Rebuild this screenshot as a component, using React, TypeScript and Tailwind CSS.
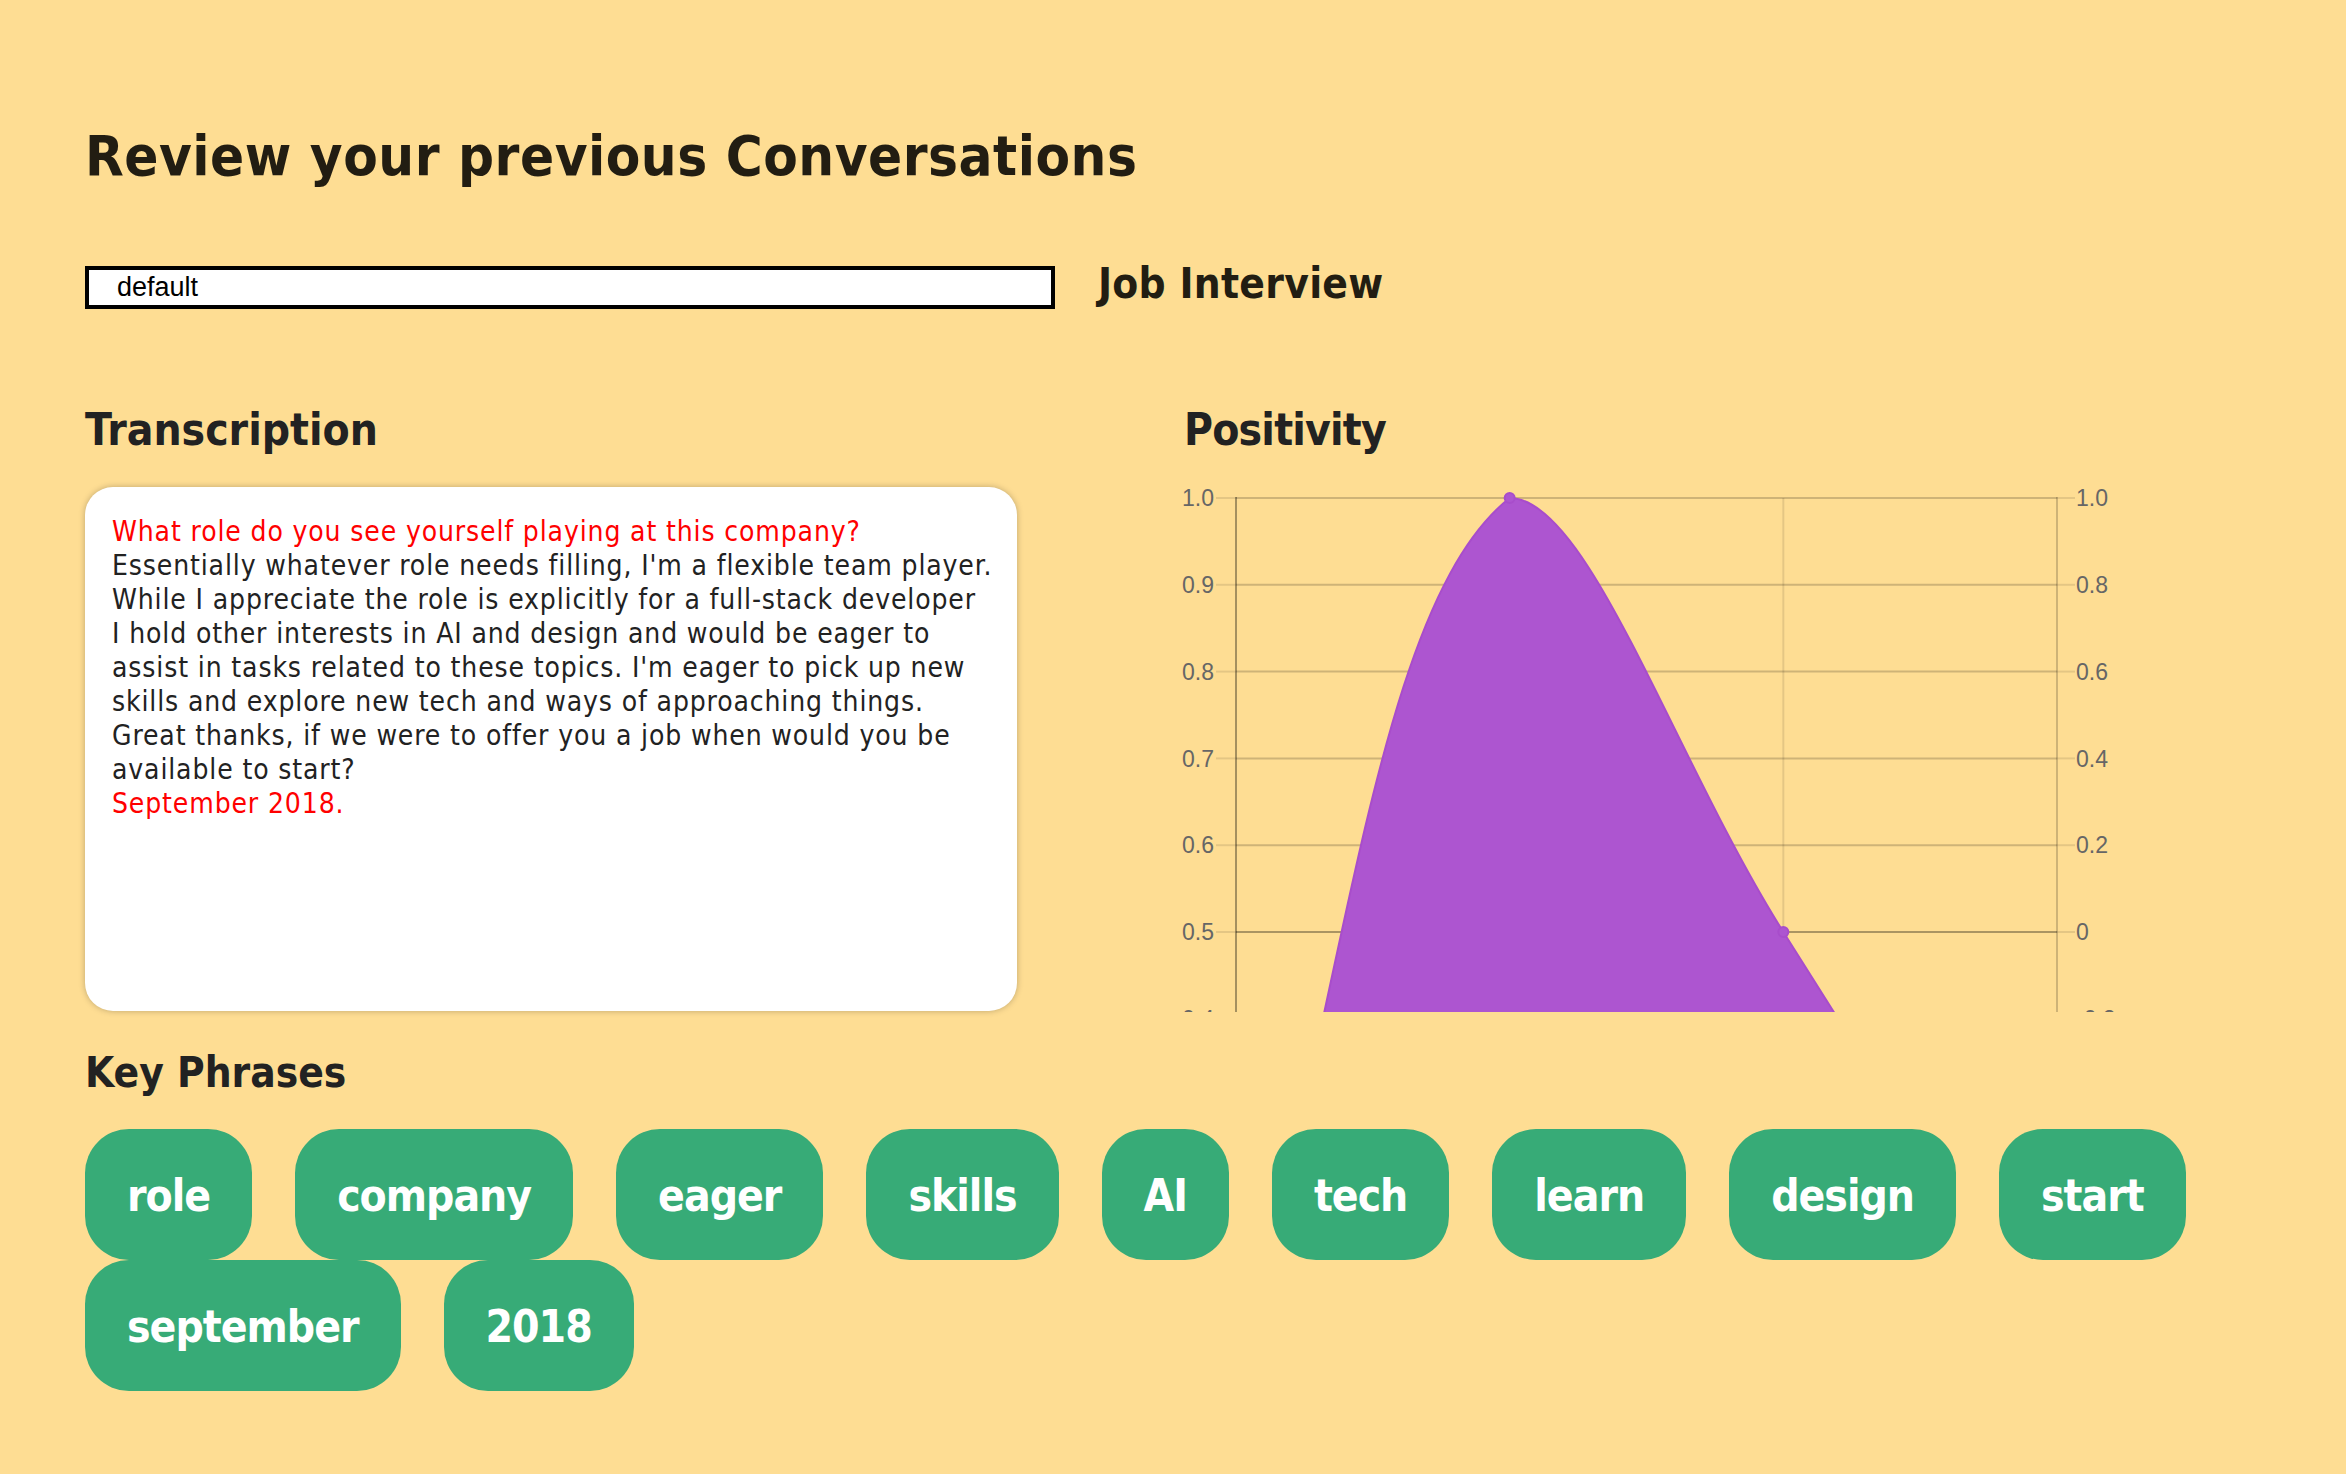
import React from 'react';

type Line = { color: 'red' | 'dark'; lines: string[] };

const TRANSCRIPT: Line[] = [
  { color: 'red', lines: ['What role do you see yourself playing at this company?'] },
  {
    color: 'dark',
    lines: [
      "Essentially whatever role needs filling, I'm a flexible team player.",
      'While I appreciate the role is explicitly for a full-stack developer',
      'I hold other interests in AI and design and would be eager to',
      "assist in tasks related to these topics. I'm eager to pick up new",
      'skills and explore new tech and ways of approaching things.',
    ],
  },
  {
    color: 'dark',
    lines: ['Great thanks, if we were to offer you a job when would you be', 'available to start?'],
  },
  { color: 'red', lines: ['September 2018.'] },
];

const PHRASES = ['role', 'company', 'eager', 'skills', 'AI', 'tech', 'learn', 'design', 'start', 'september', '2018'];

const FONT = '"DejaVu Sans Condensed", "DejaVu Sans", sans-serif';

// chart geometry (svg-local px)
const Y_TOP = 21;
const STEP = 86.8;
const X_LEFT = 56;
const X_RIGHT = 877;
const yOf = (v: number) => Y_TOP + (1 - v) * 10 * STEP;

type Pt = { x: number; y: number };

// same spline as chart.js (tension 0.4, control points capped to the chart area top)
function splinePath(points: Pt[], tension = 0.4) {
  const cps = points.map((p, i) => {
    const prev = points[i - 1] ?? p;
    const next = points[i + 1] ?? p;
    const d01 = Math.hypot(p.x - prev.x, p.y - prev.y);
    const d12 = Math.hypot(next.x - p.x, next.y - p.y);
    const s01 = d01 / (d01 + d12 || 1);
    const s12 = d12 / (d01 + d12 || 1);
    const fa = tension * s01;
    const fb = tension * s12;
    return {
      prev: { x: p.x - fa * (next.x - prev.x), y: Math.max(Y_TOP, p.y - fa * (next.y - prev.y)) },
      next: { x: p.x + fb * (next.x - prev.x), y: Math.max(Y_TOP, p.y + fb * (next.y - prev.y)) },
    };
  });
  let d = `M ${points[0].x} ${points[0].y}`;
  for (let i = 1; i < points.length; i++) {
    const a = cps[i - 1].next;
    const b = cps[i].prev;
    d += ` C ${a.x} ${a.y} ${b.x} ${b.y} ${points[i].x} ${points[i].y}`;
  }
  return d;
}

function PositivityChart() {
  const data = [0, 1, 0.5, 0];
  const pts = data.map((v, i) => ({ x: X_LEFT + ((X_RIGHT - X_LEFT) * i) / 3, y: yOf(v) }));
  const line = splinePath(pts);
  const area = `${line} L ${X_RIGHT} 1000 L ${X_LEFT} 1000 Z`;
  const leftTicks = ['1.0', '0.9', '0.8', '0.7', '0.6', '0.5', '0.4'];
  const rightTicks = ['1.0', '0.8', '0.6', '0.4', '0.2', '0', '-0.2'];

  return (
    <svg width={980} height={535} className="block">
      {leftTicks.map((t, i) => {
        const y = Y_TOP + i * STEP;
        const inner = i === 5 ? 'rgba(0,0,0,0.33)' : 'rgba(0,0,0,0.19)';
        return (
          <g key={t}>
            <line x1={36} x2={X_LEFT} y1={y} y2={y} stroke="rgba(0,0,0,0.1)" strokeWidth={2} />
            <line x1={X_LEFT} x2={X_RIGHT} y1={y} y2={y} stroke={inner} strokeWidth={2} />
            <line x1={X_RIGHT} x2={895} y1={y} y2={y} stroke="rgba(0,0,0,0.1)" strokeWidth={2} />
            <text x={34} y={y + 8.2} textAnchor="end" fontSize={23} fill="#666" fontFamily='"Liberation Sans", Arial, sans-serif'>
              {t}
            </text>
            <text x={896} y={y + 8.2} fontSize={23} fill="#666" fontFamily='"Liberation Sans", Arial, sans-serif'>
              {rightTicks[i]}
            </text>
          </g>
        );
      })}
      <line x1={X_LEFT} x2={X_LEFT} y1={Y_TOP - 1} y2={600} stroke="rgba(0,0,0,0.35)" strokeWidth={2} />
      <line x1={pts[1].x} x2={pts[1].x} y1={Y_TOP} y2={600} stroke="rgba(0,0,0,0.1)" strokeWidth={2} />
      <line x1={pts[2].x} x2={pts[2].x} y1={Y_TOP} y2={600} stroke="rgba(0,0,0,0.1)" strokeWidth={2} />
      <line x1={X_RIGHT} x2={X_RIGHT} y1={Y_TOP - 1} y2={600} stroke="rgba(0,0,0,0.19)" strokeWidth={2} />
      <path d={area} fill="#ad55d0" />
      <path d={line} fill="none" stroke="#a84dcb" strokeWidth={2} />
      {pts.map((p, i) => (
        <circle key={i} cx={p.x} cy={p.y} r={5} fill="#ad55d0" stroke="#a84dcb" strokeWidth={2} />
      ))}
    </svg>
  );
}

export default function App() {
  return (
    <div className="min-h-[1474px] w-full bg-[#fedd93] pl-[85px] pt-[128px] text-[#222]" style={{ fontFamily: FONT }}>
      <h1 className="text-[56px] font-bold leading-none tracking-[0.5px] text-[#221d12]">Review your previous Conversations</h1>

      <div className="mt-[82px] flex items-center">
        <div
          className="flex h-[43px] w-[970px] items-center border-4 border-black bg-white pl-[28px] text-[27px] text-black"
          style={{ fontFamily: '"Liberation Sans", Arial, sans-serif' }}
        >
          default
        </div>
        <h3 className="ml-[43px] -mt-[8px] text-[42px] font-bold leading-none tracking-[0.3px] text-[#221d12]">Job Interview</h3>
      </div>

      <div className="mt-[99px] flex gap-[163px]">
        <section className="w-[932px]">
          <h2 className="text-[44px] font-bold leading-none">Transcription</h2>
          <div className="mt-[35px] h-[524px] rounded-[28px] bg-white pl-[27px] pt-[28px] text-[28px] leading-[34px] tracking-[0.87px] shadow-[0_0_6px_rgba(0,0,0,0.25)]">
            {TRANSCRIPT.map((u, i) => (
              <p key={i} className={u.color === 'red' ? 'text-[#ff0000]' : 'text-[#222]'}>
                {u.lines.map((l) => (
                  <span key={l} className="block whitespace-nowrap">
                    {l}
                  </span>
                ))}
              </p>
            ))}
          </div>
        </section>

        <section className="flex-1">
          <h2 className="ml-[4px] text-[44px] font-bold leading-none tracking-[-0.8px]">Positivity</h2>
          <div className="mt-[25px] h-[535px] overflow-hidden">
            <PositivityChart />
          </div>
        </section>
      </div>

      <h2 className="mt-[40px] text-[42px] font-bold leading-none">Key Phrases</h2>
      <div className="mt-[35px] flex flex-wrap gap-x-[43px] pr-[100px]">
        {PHRASES.map((p) => (
          <span
            key={p}
            className="rounded-[44px] bg-[#37ab77] px-[42px] pb-[42px] pt-[45px] text-[44px] font-bold leading-none tracking-[-1px] text-white"
          >
            {p}
          </span>
        ))}
      </div>
    </div>
  );
}
